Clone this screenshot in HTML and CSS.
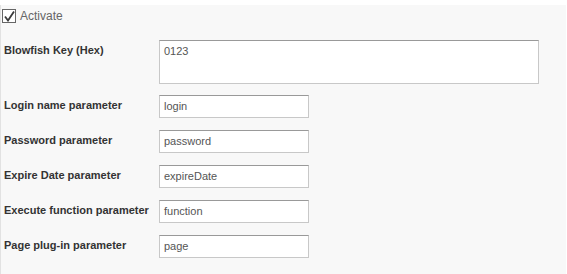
FILE: index.html
```html
<!DOCTYPE html>
<html lang="en">
<head>
  <meta charset="UTF-8">
  <title>Blowfish settings</title>
  <link rel="stylesheet" href="styles.css">
</head>
<body>
  <div class="panel">
    <!-- activate -->
    <label class="activate">
      <span class="check">
        <svg width="11" height="11" viewBox="0 0 11 11"><path d="M1 5.5 L4 9.5 L10 0.5" fill="none" stroke="#3a3a3a" stroke-width="1.8"/></svg>
      </span>
      Activate
    </label>
    <div class="form">
      <div class="lbl">Blowfish Key (Hex)</div>
      <div class="key">0123</div>

      <div class="lbl">Login name parameter</div>
      <div class="field">login</div>

      <div class="lbl">Password parameter</div>
      <div class="field">password</div>

      <div class="lbl">Expire Date parameter</div>
      <div class="field">expireDate</div>

      <div class="lbl">Execute function parameter</div>
      <div class="field">function</div>

      <div class="lbl">Page plug-in parameter</div>
      <div class="field">page</div>
    </div>
  </div>
</body>
</html>
```

FILE: styles.css
```css
*{
  margin: 0;
  padding: 0;
  box-sizing: border-box;
}
html,body{
  height: 100%;
}
body{
  background-color: #fff;
  font-family: "Liberation Sans", Arial, sans-serif;
  padding-top: 5px;
}
.panel{
  height: 100%;
  margin-right: 1px;
  padding: 3px 0 0 1px;
  background-color: #f8f8f8;
  border-left: 1px solid #e2e2e2;
}
/* 勾选框 */
.activate{
  display: flex;
  align-items: center;
  gap: 4px;
  height: 16px;
  font-size: 12px;
  color: #666;
}
.check{
  display: flex;
  align-items: center;
  justify-content: center;
  width: 14px;
  height: 14px;
  border: 1px solid #666;
  background-color: #fff;
}
.form{
  display: grid;
  grid-template-columns: 155px 380px;
  row-gap: 12px;
  margin-top: 16px;
  padding-left: 2px;
}
.lbl{
  padding-top: 4px;
  font-size: 11px;
  font-weight: 700;
  color: #333;
}
.key,.field{
  padding: 4px 4px;
  font-size: 11px;
  color: #555;
  background-color: #fff;
  border: 1px solid #c8c8c8;
  border-top-color: #999;
}
.key{
  height: 44px;
  margin-bottom: -1px;
}
.field{
  width: 150px;
  height: 23px;
}
```
